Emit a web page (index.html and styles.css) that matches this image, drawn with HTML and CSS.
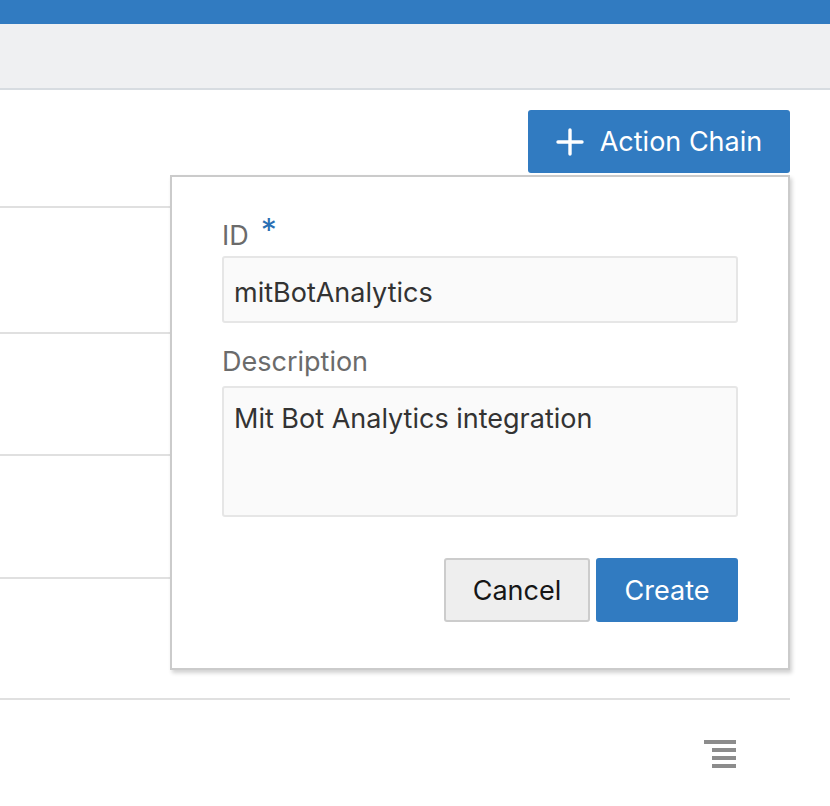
FILE: index.html
```html
<!DOCTYPE html>
<html>
<head>
<meta charset="utf-8">
<link rel="stylesheet" href="styles.css">
</head>
<body>
<div class="topbar"></div>
<div class="subbar"></div>
<main class="content">
  <div class="toolbar">
    <button class="btn btn-primary btn-add">
      <svg class="plus" width="28" height="28" viewBox="0 0 28 28"><path d="M14 2v24M2 14h24" stroke="#fff" stroke-width="3.4" stroke-linecap="round" fill="none"/></svg>
      <span>Action Chain</span>
    </button>
  </div>
  <div class="table">
    <div class="row r1"></div>
    <div class="row r2"></div>
    <div class="row r3"></div>
    <div class="row r4"></div>
    <div class="row last"></div>
  </div>
  <div class="footer">
    <div class="menu-icon"><span class="l1"></span><span></span><span></span><span></span></div>
  </div>
  <div class="popup">
    <label class="label">ID<span class="req">*</span></label>
    <div class="input">mitBotAnalytics</div>
    <label class="label label-desc">Description</label>
    <div class="textarea">Mit Bot Analytics integration</div>
    <div class="actions">
      <button class="btn btn-secondary">Cancel</button>
      <button class="btn btn-primary btn-create">Create</button>
    </div>
  </div>
</main>
</body>
</html>
```
FILE: styles.css
```css
* { box-sizing: border-box; }
html, body { margin: 0; padding: 0; background: #fff; }
body { font-family: Inter, "Liberation Sans", sans-serif; width: 830px; height: 806px; overflow: hidden; position: relative; }
.topbar { height: 24px; background: #317bc1; }
.subbar { height: 66px; background: #eff0f2; border-bottom: 2px solid #d7dce1; }
.content { position: relative; }
.toolbar { display: flex; justify-content: flex-end; align-items: flex-start; height: 83px; padding: 20px 40px 0 0; }
.btn { font-family: inherit; font-size: 27px; border-radius: 3px; cursor: pointer; display: flex; align-items: center; justify-content: center; }
.btn-primary { background: #317bc1; color: #fff; border: none; }
.btn-add { width: 262px; height: 63px; gap: 16px; padding: 0; }
.plus { display: block; }
.table { margin-top: 33px; width: 790px; }
.row { border-top: 2px solid #e0e0e0; }
.r1 { height: 126px; }
.r2 { height: 122px; }
.r3 { height: 123px; }
.r4 { height: 121px; }
.row.last { height: 0; }
.footer { display: flex; justify-content: flex-end; padding: 40px 94px 0 0; }
.menu-icon { width: 32px; display: flex; flex-direction: column; align-items: flex-end; gap: 4px; }
.menu-icon span { display: block; width: 24px; height: 4px; background: #8c8c8c; }
.menu-icon span.l1 { width: 32px; }
.popup { position: absolute; left: 170px; top: 85px; width: 620px; height: 495px; background: #fff; border: 2px solid #cbcbcb; box-shadow: 2px 3px 4px rgba(0,0,0,0.18); padding: 39px 50px 0 50px; }
.label { display: block; font-size: 27px; line-height: 36px; height: 36px; color: #6b6b6b; }
.req { color: #2a6fb3; font-size: 32px; position: relative; top: -3px; margin-left: 12px; }
.input { margin-top: 4px; height: 67px; border: 2px solid #e6e6e6; border-radius: 3px; background: #fafafa; font-size: 27px; line-height: 36px; color: #333; padding: 17px 10px 0 10px; }
.label-desc { margin-top: 21px; }
.textarea { margin-top: 6px; height: 131px; border: 2px solid #e6e6e6; border-radius: 3px; background: #fafafa; font-size: 27px; line-height: 36px; color: #333; padding: 13px 10px 0 10px; }
.actions { display: flex; justify-content: flex-end; gap: 6px; margin-top: 41px; }
.btn-secondary { width: 146px; height: 64px; background: #eeeeee; border: 2px solid #cccccc; color: #161616; }
.btn-create { width: 142px; height: 64px; }
```
